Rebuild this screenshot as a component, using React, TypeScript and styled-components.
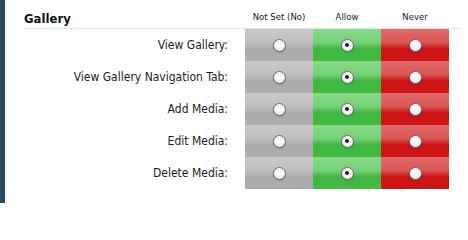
import React from "react";
import styled, { createGlobalStyle } from "styled-components";

const Global = createGlobalStyle`
  html, body { margin: 0; padding: 0; background: #fff; }
  body { font-family: "DejaVu Sans Condensed", "DejaVu Sans", sans-serif; color: #1a1a1a; }
`;

const Page = styled.div`
  display: flex;
  width: 468px;
  height: 203px;
  overflow: hidden;
`;

const SideStrip = styled.div`
  width: 5px;
  flex: none;
  background: #2c4b5f;
`;

const Content = styled.div`
  flex: 1;
  padding-left: 19px;
  padding-right: 8px;
`;

const Table = styled.div`
  display: grid;
  grid-template-columns: 221px 68px 68px 68px 1fr;
  grid-template-rows: 29px repeat(5, 32px);
`;

const HeaderCell = styled.div<{ $first?: boolean }>`
  border-bottom: 1px solid #dbe6ec;
  display: flex;
  align-items: ${(p) => (p.$first ? "flex-end" : "center")};
  justify-content: ${(p) => (p.$first ? "flex-start" : "center")};
  padding-bottom: ${(p) => (p.$first ? "2px" : "0")};
  padding-top: ${(p) => (p.$first ? "0" : "5px")};
  box-sizing: border-box;
`;

const Title = styled.span`
  font-family: "DejaVu Sans Condensed", "DejaVu Sans", sans-serif;
  font-weight: bold;
  font-size: 13px;
  color: #111;
`;

const ColHead = styled.span`
  font-size: 9.5px;
  color: #222;
`;

const Label = styled.div`
  display: flex;
  align-items: center;
  justify-content: flex-end;
  padding-right: 17px;
  font-size: 12px;
  color: #1c1c1c;
`;

const palettes = {
  none: ["#c8c8c8", "#bebebe", "#aaaaaa", "#adadad"],
  allow: ["#88d988", "#78d078", "#3fb73f", "#44bb44"],
  never: ["#e36b6b", "#da5656", "#cc1111", "#cf1818"],
} as const;

type Kind = keyof typeof palettes;

const Cell = styled.div<{ $kind: Kind }>`
  display: flex;
  align-items: center;
  justify-content: center;
  background: ${(p) => {
    const c = palettes[p.$kind];
    return `linear-gradient(to bottom, ${c[0]} 0%, ${c[1]} 42%, ${c[2]} 62%, ${c[3]} 100%)`;
  }};
`;

const Radio = styled.span<{ $checked?: boolean }>`
  position: relative;
  width: 13px;
  height: 13px;
  border-radius: 50%;
  box-sizing: border-box;
  border: 1px solid #6f6f6f;
  background: radial-gradient(circle at 50% 35%, #ffffff 0%, #f4f4f4 55%, #d8d8d8 100%);
  box-shadow: 0 0.5px 1px rgba(0, 0, 0, 0.25);
  &::after {
    content: "";
    display: ${(p) => (p.$checked ? "block" : "none")};
    position: absolute;
    left: 50%;
    top: 50%;
    width: 4px;
    height: 4px;
    margin: -2px 0 0 -2px;
    border-radius: 50%;
    background: #222;
  }
`;

const Spacer = styled.div``;

const rows = [
  "View Gallery:",
  "View Gallery Navigation Tab:",
  "Add Media:",
  "Edit Media:",
  "Delete Media:",
];

export default function App() {
  return (
    <>
      <Global />
      <Page>
        <SideStrip />
        <Content>
          <Table>
            <HeaderCell $first>
              <Title>Gallery</Title>
            </HeaderCell>
            <HeaderCell>
              <ColHead>Not Set (No)</ColHead>
            </HeaderCell>
            <HeaderCell>
              <ColHead>Allow</ColHead>
            </HeaderCell>
            <HeaderCell>
              <ColHead>Never</ColHead>
            </HeaderCell>
            <HeaderCell />
            {rows.map((r) => (
              <React.Fragment key={r}>
                <Label>{r}</Label>
                <Cell $kind="none">
                  <Radio />
                </Cell>
                <Cell $kind="allow">
                  <Radio $checked />
                </Cell>
                <Cell $kind="never">
                  <Radio />
                </Cell>
                <Spacer />
              </React.Fragment>
            ))}
          </Table>
        </Content>
      </Page>
    </>
  );
}
